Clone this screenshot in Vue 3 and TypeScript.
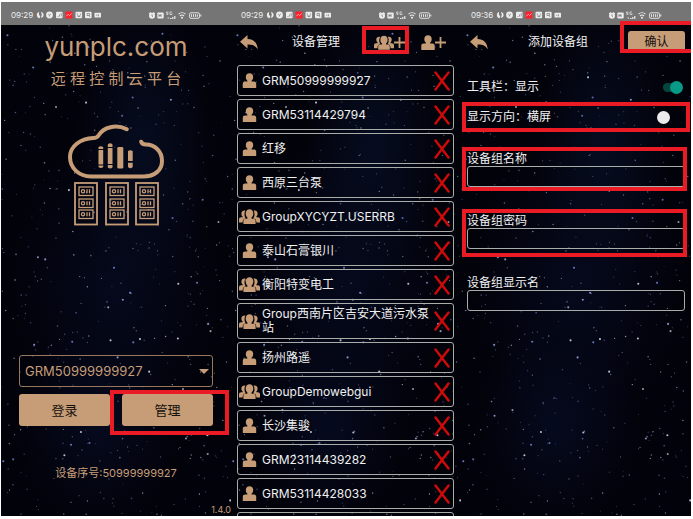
<script setup lang="ts">
import { ref } from 'vue'

type Screen = 'login' | 'devices' | 'group'

interface Phone {
  screen: Screen
  time: string
}

interface Device {
  name: string
  group: boolean
}

interface Star {
  x: number
  y: number
  r: number
  o: number
  c: string
}

const phones: Phone[] = [
  { screen: 'login', time: '09:29' },
  { screen: 'devices', time: '09:29' },
  { screen: 'group', time: '09:36' },
]

const devices: Device[] = [
  { name: 'GRM50999999927', group: false },
  { name: 'GRM53114429794', group: false },
  { name: '红移', group: false },
  { name: '西原三台泵', group: false },
  { name: 'GroupXYCYZT.USERRB', group: true },
  { name: '泰山石膏银川', group: false },
  { name: '衡阳特变电工', group: true },
  { name: 'Group西南片区吉安大道污水泵站', group: true },
  { name: '扬州路遥', group: false },
  { name: 'GroupDemowebgui', group: true },
  { name: '长沙集骏', group: false },
  { name: 'GRM23114439282', group: false },
  { name: 'GRM53114428033', group: false },
]

const fields = [
  { id: 'group-name', label: '设备组名称', type: 'text', mark: 'mark-name' },
  { id: 'group-password', label: '设备组密码', type: 'password', mark: 'mark-password' },
  { id: 'group-display', label: '设备组显示名', type: 'text', mark: '' },
]

const serial = ref('GRM50999999927')
const showToolbar = ref(true)
const portrait = ref(false)

// Seeded generator, so the night sky is the same on every load.
function makeStars(count: number): Star[] {
  let seed = 20917
  const next = () => {
    seed = (seed * 16807) % 2147483647
    return seed / 2147483647
  }
  const tints = ['#8fa0d8', '#6f86d0', '#c9d2ec', '#5d74b8', '#a8a6b4']
  return Array.from({ length: count }, () => {
    const bright = next() > 0.92
    return {
      x: Math.round(next() * 2300) / 10,
      y: Math.round(next() * 4910) / 10,
      r: bright ? 1 : 0.5 + next() * 0.3,
      o: bright ? 0.9 : 0.25 + next() * 0.5,
      c: tints[Math.floor(next() * tints.length)],
    }
  })
}

const stars = makeStars(560)
const racks = [6, 37, 67]
const units = [63, 75, 86]
</script>

<template>
  <svg class="defs" aria-hidden="true">
    <symbol id="user" viewBox="0 0 14 15">
      <path d="M7 .3c2.300 0 3.700 1.500 3.700 3.700 0 1.700-.7 2.900-1.600 3.700v.8h2.300c1.400 0 2.300.9 2.300 2.300V15H.3v-4.200c0-1.400.9-2.300 2.300-2.300h2.300v-.8C4 6.900 3.300 5.700 3.300 4 3.300 1.800 4.700.3 7 .3z" />
    </symbol>
    <symbol id="users" viewBox="0 0 21 15">
      <path d="M5.600 1.500c-2 0-3.200 1.100-3.200 2.900 0 1.300.5 2.300 1.200 2.900v.9H2.200C.9 8.200 0 9 0 10.300v3.200h3.700v-.9c0-2 1-3 2.800-3.200h.4c-1-1.100-1.400-2.600-1.400-4.200 0-1.500.3-2.700 1-3.600z" />
      <path d="M15.400 1.500c2 0 3.200 1.100 3.200 2.900 0 1.300-.5 2.300-1.200 2.900v.9h1.400c1.300 0 2.200.8 2.200 2.100v3.200h-3.700v-.9c0-2-1-3-2.800-3.200h-.4c1-1.100 1.400-2.600 1.400-4.200 0-1.500-.3-2.700-1-3.600z" />
      <path d="M10.500.3c2.400 0 3.800 1.700 3.800 4.200 0 1.800-.7 3.200-1.700 4v1.200h1.900c1.300 0 2.100.9 2.100 2.200V15H4.400v-3.100c0-1.300.8-2.200 2.100-2.200h1.900V8.500c-1-.8-1.700-2.200-1.700-4C6.700 2 8.100.3 10.500.3z" />
    </symbol>
    <symbol id="back" viewBox="0 0 18 15">
      <path d="M7.500 0v3.900c6 .1 10 3.600 10.200 10.600-2.100-3.800-5.200-5-10.200-4.900v4L0 6.700z" />
    </symbol>
    <symbol id="plus" viewBox="0 0 11 11">
      <path d="M4.600 0h1.800v4.600H11v1.800H6.400V11H4.600V6.400H0V4.600h4.600z" />
    </symbol>
  </svg>

  <main class="board">
    <section v-for="(phone, i) in phones" :key="i" class="phone">
      <svg class="sky" viewBox="0 0 230 491" preserveAspectRatio="xMidYMin slice" aria-hidden="true">
        <circle v-for="(s, n) in stars" :key="n" :cx="s.x" :cy="s.y" :r="s.r" :fill="s.c" :opacity="s.o" />
      </svg>

      <div class="status">
        <span class="time">{{ phone.time }}</span>
        <svg class="notices" width="66" height="8" viewBox="0 0 66 8" aria-hidden="true">
          <g fill="#ececec">
            <path d="M3 1C1.500 1.300.7 2.800.9 4.400c.2 1.600 1.300 2.700 2.700 2.900L4.300 5 3 4zM5 1l.8 2.500L5 6.800c1.600-.2 2.600-1.400 2.600-2.900C7.600 2.300 6.500 1.200 5 1z" />
            <circle cx="13.500" cy="4" r="3.400" />
            <rect x="20" y="0.800" width="6.600" height="6.400" rx="1" />
            <rect x="39.500" y="0.800" width="6.600" height="6.400" rx="1" />
            <rect x="49" y="0.800" width="6.600" height="6.400" rx="1" />
            <rect x="58.500" y="1.800" width="6.500" height="4.800" rx="0.500" />
          </g>
          <rect x="29.500" y="0.500" width="7" height="7" fill="#ff1f2d" />
          <g fill="none" stroke="#7a7a7a" stroke-width="0.700">
            <path d="M12.200 3l1.200 1 1.600-1M13.400 4v1.500M21.500 5.500h1M23.500 5.500v-2M25.200 5.500v-3.500M41.300 2.500a2.500 2.500 0 0 0 3 3M44.500 2.500a2.500 2.500 0 0 1-3 3M51 2.500h2.500v2H51zM53 4.500l1 1.500M60 4.200h1.500M62.500 3.300v2" />
          </g>
          <path d="M30.500 5.200l1.700-2 1.300 1.300 2.200-2" fill="none" stroke="#ffb3b3" stroke-width="0.900" />
        </svg>
        <svg class="signals" width="54" height="9" viewBox="0 0 54 9" aria-hidden="true">
          <g fill="#ececec">
            <circle cx="4" cy="4.800" r="3" />
            <path d="M.8 2.500L2.500 1l.8.900-1.600 1.400zM7.200 2.500L5.500 1l-.8.900 1.600 1.400z" />
            <rect x="9.300" y="1.600" width="6.400" height="6" rx="1" />
            <path d="M22 7h1.500v1H22zM24.200 6h1.200v2h-1.200zM26.200 5h1.200v3h-1.200zM19.500 6.500h1.500v1h-1.500z" />
          </g>
          <path d="M4 3.500V5l1 .6M11 3v3M13 3v3M11 4.500h2" fill="none" stroke="#757575" stroke-width="0.800" />
          <path d="M20.500 1h-2v1.200h1.500v1.300h-1.500M24 1h-2v2.500h2V2.300" fill="none" stroke="#ececec" stroke-width="0.700" />
          <path d="M30.500 3.200c2-1.900 5-1.900 7 0M32 5c1.200-1.100 2.900-1.100 4 0" fill="none" stroke="#ececec" stroke-width="1.100" />
          <circle cx="34" cy="6.800" r="1" fill="#ececec" />
          <rect x="41.500" y="1.800" width="10" height="5.500" rx="1.500" fill="none" stroke="#ececec" stroke-width="0.900" />
          <path d="M43.500 3.200v2.700M45.500 3.200v2.700M47.500 3.200v2.700M49.300 3.200v2.700" stroke="#ececec" stroke-width="0.900" />
          <path d="M52.800 3.500v2" stroke="#ececec" stroke-width="1" />
        </svg>
      </div>

      <form v-if="phone.screen === 'login'" class="login" @submit.prevent>
        <h1 class="brand">yunplc.com</h1>
        <p class="slogan">远 程 控 制 云 平 台</p>

        <svg class="cloud" width="96" height="102" viewBox="0 0 96 102" aria-hidden="true">
          <path class="line" d="M58.800 5.200C48 0 35.500 3 30.500 11.500 29 14 28 14 25.500 14 12 14.500 2 22.500 2 33c0 11 9 19.500 21 19.500h52C87 52.500 94 46 94 37c0-10-7.500-16.500-16-16.500-3 0-4.300-.5-4.800-2.700" />
          <g class="solid">
            <path d="M30.500 23q2.300-1.500 4.700 0v2h-4.700zM30.500 26h4.700v14.500h-4.700zM30.500 41.500h4.700V43q-2.300 2-4.700 0z" />
            <path d="M39.800 20.500q2.300-2.500 4.700 0V23h-4.700zM39.800 24h4.700v16h-4.700zM39.800 41h4.700v2.500q-2.300 2-4.700 0z" />
            <rect x="49.300" y="23" width="6" height="21.500" rx="1.200" />
            <path d="M60 27q2.300-1.500 4.700 0v10H60zM60 38.800h4.700V43q-2.300 2.500-4.700 0z" />
          </g>
          <g v-for="x in racks" :key="x">
            <rect class="frame" :x="x + 1" y="59" width="22" height="41.500" />
            <g v-for="y in units" :key="y">
              <rect class="unit" :x="x + 5" :y="y" width="14" height="8.500" />
              <circle class="unit" :cx="x + 9" :cy="y + 4.200" r="1.600" />
              <path class="unit" :d="`M${x + 13} ${y + 2.200}v4M${x + 15.500} ${y + 2.200}v4`" />
            </g>
          </g>
        </svg>

        <div class="picker">
          <select v-model="serial" aria-label="设备">
            <option>GRM50999999927</option>
          </select>
          <svg class="caret" width="10" height="5" viewBox="0 0 10 5" aria-hidden="true"><path d="M0 0h10L5 5z" /></svg>
        </div>

        <div class="actions">
          <button type="submit" class="solid-button">登录</button>
          <div class="marked">
            <button type="button" class="solid-button">管理</button>
            <span class="mark mark-manage" aria-hidden="true"></span>
          </div>
        </div>

        <p class="serial">设备序号:50999999927</p>
        <p class="version">1.4.0</p>
      </form>

      <template v-else-if="phone.screen === 'devices'">
        <header class="bar">
          <button type="button" class="icon-button" aria-label="返回">
            <svg width="18" height="15" aria-hidden="true"><use href="#back" /></svg>
          </button>
          <h2>设备管理</h2>
          <div class="marked">
            <button type="button" class="icon-button" aria-label="添加设备组">
              <svg width="20" height="15" aria-hidden="true"><use href="#users" /></svg>
              <svg width="11" height="11" aria-hidden="true"><use href="#plus" /></svg>
            </button>
            <span class="mark mark-group" aria-hidden="true"></span>
          </div>
          <button type="button" class="icon-button add-user" aria-label="添加设备">
            <svg width="14" height="15" aria-hidden="true"><use href="#user" /></svg>
            <svg width="11" height="11" aria-hidden="true"><use href="#plus" /></svg>
          </button>
        </header>
        <ul class="list">
          <li v-for="d in devices" :key="d.name" class="item">
            <svg v-if="d.group" class="who" width="21" height="15" aria-hidden="true"><use href="#users" /></svg>
            <svg v-else class="who" width="21" height="15" aria-hidden="true"><use href="#user" /></svg>
            <span class="name">{{ d.name }}</span>
            <button type="button" class="icon-button" :aria-label="'删除 ' + d.name">
              <svg class="cross" width="16" height="20" viewBox="0 0 16 20" aria-hidden="true">
                <path d="M1.500 1.500l13 17M14.500 1.500l-13 17" />
              </svg>
            </button>
          </li>
          <li class="item"></li>
        </ul>
      </template>

      <template v-else>
        <header class="bar bar-group">
          <button type="button" class="icon-button" aria-label="返回">
            <svg width="18" height="15" aria-hidden="true"><use href="#back" /></svg>
          </button>
          <h2>添加设备组</h2>
          <div class="marked">
            <button type="submit" form="group-form" class="solid-button confirm">确认</button>
            <span class="mark mark-confirm" aria-hidden="true"></span>
          </div>
        </header>
        <form id="group-form" class="group" @submit.prevent>
          <div class="option">
            <label for="toolbar">工具栏：显示</label>
            <input id="toolbar" v-model="showToolbar" type="checkbox" class="switch" />
          </div>
          <div class="option marked">
            <label for="direction">显示方向：横屏</label>
            <input id="direction" v-model="portrait" type="checkbox" class="switch" />
            <span class="mark mark-direction" aria-hidden="true"></span>
          </div>
          <div class="fields">
            <div v-for="f in fields" :key="f.id" class="field marked">
              <label :for="f.id">{{ f.label }}</label>
              <input :id="f.id" :type="f.type" autocomplete="off" />
              <span v-if="f.mark" class="mark" :class="f.mark" aria-hidden="true"></span>
            </div>
          </div>
        </form>
      </template>
    </section>
  </main>
</template>

<style>
body {
  background: #fff;
}
</style>

<style scoped>
* {
  box-sizing: border-box;
}

.defs {
  position: absolute;
  width: 0;
  height: 0;
}

.board {
  --gold: #c69d77;
  --rule: #a9ada9;
  --red: #ea1b24;
  display: grid;
  grid-template-columns: repeat(3, 1fr);
  height: 100vh;
  padding: 2px 2px 3px 1px;
  font-family: Inter, "Noto Sans CJK SC", sans-serif;
  font-size: 12px;
  line-height: 16px;
  color: #f0f0f0;
}

.phone {
  position: relative;
  isolation: isolate;
  display: flex;
  flex-direction: column;
  min-width: 0;
  min-height: 0;
  overflow: hidden;
  background:
    radial-gradient(ellipse 30% 28% at 62% 28%, #060c20 0%, transparent 100%),
    radial-gradient(ellipse 45% 30% at 50% 55%, #05091c 0%, transparent 100%),
    radial-gradient(ellipse 35% 20% at 42% 82%, #060a1e 0%, transparent 100%),
    #02020a;
}

.sky {
  position: absolute;
  inset: 0;
  z-index: -1;
  width: 100%;
  height: 100%;
}

.status {
  display: flex;
  flex: none;
  align-items: center;
  height: 23px;
  padding: 3px 29px 0 10px;
  background: #757575;
  color: #f0f0f0;
  font-size: 8px;
}

.time {
  width: 25px;
}

.signals {
  margin-left: auto;
}

h1,
h2,
p,
ul {
  margin: 0;
  padding: 0;
  font-weight: 400;
}

button,
input,
select {
  margin: 0;
  font: inherit;
}

.marked {
  position: relative;
}

.mark {
  position: absolute;
  border: 4px solid var(--red);
  pointer-events: none;
}

.mark-manage {
  inset: -4px -16px -9px -12px;
}

.mark-group {
  inset: -9px -4px -4px -12px;
}

.mark-confirm {
  inset: -10px -10px 0 -8px;
}

.mark-direction {
  inset: 0 -5px;
}

.mark-name {
  inset: -4px -2px -4px -5px;
}

.mark-password {
  inset: -4px -2px -8px -5px;
}

.solid-button {
  width: 100%;
  height: 32px;
  padding: 0;
  border: 0;
  border-radius: 3px;
  background: var(--gold);
  color: #15100c;
  font-size: 13px;
}

.icon-button {
  display: flex;
  align-items: center;
  padding: 0;
  border: 0;
  background: none;
  fill: var(--gold);
}

.login {
  display: flex;
  flex: 1;
  flex-direction: column;
  padding: 6px 18px 0;
  color: var(--gold);
}

.brand {
  font-size: 26px;
  line-height: 32px;
  text-align: center;
}

.slogan {
  margin-top: 6px;
  font-size: 15px;
  line-height: 20px;
  text-align: center;
}

.cloud {
  align-self: center;
  margin-top: 35px;
}

.line {
  fill: none;
  stroke: var(--gold);
  stroke-width: 4;
  stroke-linecap: round;
}

.solid {
  fill: var(--gold);
}

.frame {
  fill: none;
  stroke: var(--gold);
  stroke-width: 1.8;
}

.unit {
  fill: none;
  stroke: var(--gold);
  stroke-width: 1.3;
}

.picker {
  position: relative;
  margin-top: 129px;
}

.picker select {
  display: block;
  width: 100%;
  height: 32px;
  padding: 0 24px 0 5px;
  border: 1px solid #97785c;
  border-radius: 3px;
  appearance: none;
  background: transparent;
  color: var(--gold);
  font-size: 13px;
}

.caret {
  position: absolute;
  top: 14px;
  right: 4px;
  fill: var(--gold);
  pointer-events: none;
}

.actions {
  display: grid;
  grid-template-columns: 1fr 1fr;
  gap: 12px;
  margin-top: 7px;
}

.serial {
  margin-top: 39px;
  font-size: 11px;
  text-align: center;
}

.version {
  margin: auto -18px 0 0;
  font-size: 9px;
  line-height: 12px;
  text-align: right;
}

.bar {
  display: flex;
  flex: none;
  align-items: center;
  height: 34px;
  padding: 0 15px 0 9px;
}

.bar-group {
  padding-right: 6px;
}

.bar h2 {
  flex: 1;
  font-size: 12px;
  text-align: center;
}

.add-user {
  margin-left: 16px;
}

.confirm {
  display: block;
  width: 57px;
  height: 22px;
  font-size: 12px;
}

.list {
  display: flex;
  flex: 1;
  flex-direction: column;
  gap: 3px;
  min-height: 0;
  margin-top: 6px;
  padding: 0 7px 0 6px;
  overflow: hidden;
  list-style: none;
}

.item {
  display: flex;
  flex: none;
  align-items: center;
  min-height: 31px;
  padding: 3px 3px 3px 1px;
  border: 1px solid var(--rule);
  border-radius: 3px;
}

.who {
  flex: none;
  fill: var(--gold);
}

.name {
  flex: 1;
  margin-left: 2px;
  line-height: 14px;
}

.cross {
  fill: none;
  stroke: #cf0a0a;
  stroke-width: 2.4;
  stroke-linecap: round;
}

.item .icon-button {
  flex: none;
}

.group {
  padding: 13px 6px 0;
}

.option {
  display: flex;
  align-items: center;
  justify-content: space-between;
  height: 30px;
  padding-right: 2px;
}

.switch {
  display: flex;
  align-items: center;
  width: 26px;
  height: 13px;
  appearance: none;
}

.switch::before {
  content: "";
  width: 13px;
  height: 13px;
  border-radius: 50%;
  background: #ebebeb;
}

.switch:checked {
  justify-content: flex-end;
}

.switch:checked::before {
  background: #079a87;
  box-shadow: -5px 0 0 -2px #06443e, -9px 0 0 -2px #06443e;
}

.fields {
  display: flex;
  flex-direction: column;
  gap: 26px;
  margin-top: 19px;
}

.field {
  display: flex;
  flex-direction: column;
}

.field label {
  line-height: 15px;
}

.field input {
  width: 100%;
  height: 21px;
  padding: 0 6px;
  border: 1px solid var(--rule);
  border-radius: 3px;
  background: transparent;
  color: #f0f0f0;
}
</style>
